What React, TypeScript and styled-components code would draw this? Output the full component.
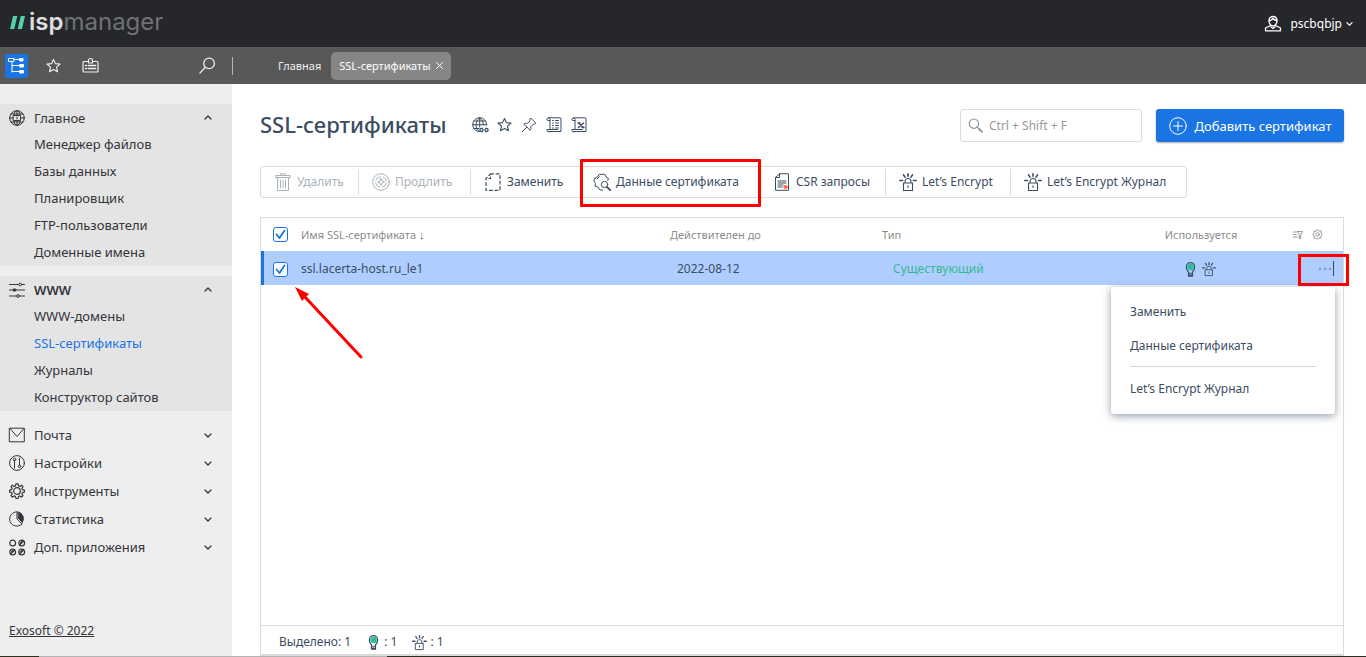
import React from 'react';
import styled, { createGlobalStyle, css } from 'styled-components';

const font = '"Noto Sans", "Open Sans", sans-serif';

const GlobalStyle = createGlobalStyle`
  *, *::before, *::after { box-sizing: border-box; }
  body { margin: 0; background: #fff; font-family: ${font}; font-size: 13px; line-height: 18px; color: #3b4d63; }
  button, input { font: inherit; color: inherit; }
  button { background: none; border: 0; padding: 0; cursor: pointer; white-space: nowrap; }
  a { color: inherit; text-decoration: none; }
  svg { display: block; flex: none; overflow: visible; }
`;

/* ---------- icons ---------- */

const Svg = styled.svg`
  fill: none;
  stroke: currentColor;
  stroke-width: 1;
  stroke-linecap: round;
  stroke-linejoin: round;
`;

type IconProps = { size?: number; children: React.ReactNode; weight?: number; box?: number };
const Icon = ({ size = 16, box = 16, weight = 1, children }: IconProps) => (
  <Svg width={size} height={size} viewBox={`0 0 ${box} ${box}`} strokeWidth={weight} style={{ strokeWidth: weight }} aria-hidden="true">
    {children}
  </Svg>
);

const TreeIcon = () => (
  <Icon size={17} box={17}>
    <path d="M1 1.500h5v3H1zM6 2.500h6M4 4.500v10.500M4 8.500h8M4 14.500h8" />
    <path d="M12 1.500h3v2.500h-3zM12 7.500h3.500v2.500H12zM12 13.500h3.500V16H12z" fill="currentColor" />
  </Icon>
);
const StarIcon = ({ size = 15 }: { size?: number }) => (
  <Icon size={size} weight={1.2}>
    <path d="M8 1.500l2 4.500 5 .5-3.800 3.300 1.100 4.900L8 12.200l-4.300 2.500 1.100-4.900L1 6.500 6 6z" />
  </Icon>
);
const BadgeIcon = () => (
  <Icon size={17} box={17} weight={1.200}>
    <path d="M6.500 4.500H2a1 1 0 0 0-1 1v8.500a1 1 0 0 0 1 1h13a1 1 0 0 0 1-1V5.500a1 1 0 0 0-1-1h-4.500" />
    <path d="M6.500 6V3.500a2 2 0 0 1 4 0V6z" />
    <path d="M3.500 8.500h1M3.500 11.500h1M6.500 8.500h7M6.500 11.500h7" strokeWidth="1.600" />
  </Icon>
);
const SearchIcon = ({ flip = false, size = 17 }: { flip?: boolean; size?: number }) => (
  <Icon size={size} weight={1.200}>
    {flip ? (
      <><circle cx="9.500" cy="6" r="5" /><path d="M6 9.700L.8 15.200" /></>
    ) : (
      <><circle cx="6.300" cy="6" r="5" /><path d="M9.800 9.700l2 2" /><path d="M11.800 11.700l3.200 3.100" style={{ strokeWidth: 2 }} /></>
    )}
  </Icon>
);
const UserIcon = () => (
  <Icon size={18} box={18} weight={1.300}>
    <path d="M9 1.500c-2.800 0-4 1.800-4 4.200 0 2.600 1.800 5.300 4 5.300s4-2.700 4-5.300c0-2.400-1.200-4.200-4-4.200z" />
    <path d="M5.200 5.500c2 0 3-1 3.800-2 1 1.300 2 2 3.800 2M6.500 10.500L1.500 13v2.800h15V13l-5-2.500M7 12l2 1.500 2-1.500" />
  </Icon>
);
const Chevron = ({ up = false, size = 8 }: { up?: boolean; size?: number }) => (
  <Icon size={size} box={8} weight={1.300}>
    {up ? <path d="M1 5l3-3 3 3" /> : <path d="M1 3l3 3 3-3" />}
  </Icon>
);
const HomeGlobe = () => (
  <Icon>
    <circle cx="8" cy="8" r="7.300" />
    <path d="M8 .7v4M8 11v4.300M2 4h12M2 12h12M.7 8H4M12 8h3.300M5 4.500C5.500 2 6.500.9 8 .7c1.500.2 2.500 1.300 3 3.800M5 11.500c.5 2.500 1.500 3.600 3 3.800 1.500-.2 2.500-1.300 3-3.800M4.500 5.500h7v5h-7zM8 7v2" />
  </Icon>
);
const SlidersIcon = () => (
  <Icon>
    <path d="M.5 2.500h9M13 2.500h2.500M.5 8h15M.5 14h7M10.500 14h5" />
    <circle cx="11.300" cy="2.500" r="1.400" /><circle cx="5.500" cy="8" r="1.300" fill="currentColor" /><circle cx="9" cy="14" r="1.400" />
  </Icon>
);
const MailIcon = () => <Icon><path d="M.7 1.200h14.600v13.600H.7zM1 1.500l7 8 7-8" /></Icon>;
const TuneIcon = () => (
  <Icon><circle cx="8" cy="8" r="7.400" /><path d="M5.500 5.500V13M10.500 3v7" /><circle cx="5.500" cy="4.500" r="1.300" /><circle cx="10.500" cy="11.300" r="1.300" /></Icon>
);
const gearPath = 'M6.900.8h2.200l.4 2 1.300.6 1.800-1.200 1.400 1.500-1.100 1.700.5 1.300 2 .4v2l-2 .4-.5 1.400 1.100 1.700-1.400 1.500-1.800-1.200-1.300.6-.4 2H6.900l-.4-2-1.300-.6-1.800 1.200L2 12.600l1.100-1.700-.5-1.400-2-.4v-2l2-.4.5-1.300L2 3.700l1.400-1.500 1.800 1.200 1.300-.6z';
const GearIcon = () => <Icon weight={1.200}><path d={gearPath} /><circle cx="8" cy="8" r="3.300" /></Icon>;
const PieIcon = () => (
  <Icon><path d="M8 .8a7.200 7.200 0 1 0 5 12.200M8 .8V8l5 5" /><path d="M9.500 1a7 7 0 0 1 3.800 10.500L9.500 7.300z" fill="currentColor" /></Icon>
);
const AppsIcon = () => (
  <Icon size={17} box={17} weight={1.200}>
    <circle cx="3.700" cy="4" r="2.900" /><circle cx="12.700" cy="4" r="2.900" /><circle cx="3.700" cy="13" r="2.900" /><circle cx="12.700" cy="13" r="2.900" />
    <path d="M11 5.700l3.400-3.400M2 14.700l3.400-3.400M11 14.700l3.400-3.400M2.500 13l1.500-1.500M11.500 4L13 2.500M11.500 13l1.500-1.500" />
  </Icon>
);
const WebLinkIcon = () => (
  <Icon>
    <path d="M14.700 8A7 7 0 1 0 7.500 14.700M7.700.8v9.200M2 4h11.500M.8 7.700h14M2 11.500h5M7.700.8C5 3 4 5.500 4 8c0 2.600 1 4.700 3 6.500M7.700.8c2.700 2.200 3.500 4.200 3.600 7" />
    <path d="M10.500 11.300h-1a1.500 1.500 0 0 0 0 3.200h1M13.500 11.300h1a1.500 1.500 0 0 1 0 3.200h-1M10.500 12.900h3" style={{ strokeWidth: 1.3 }} />
  </Icon>
);
const PinIcon = () => (
  <Icon><path d="M10 1.300l4.800 4.800-1.300 1.300-1.200-.2-2.600 2.600c.5 1.600.3 2.700-.5 3.500L2.800 7c.8-.8 2-1 3.500-.5L8.900 3.900 8.700 2.600zM5.800 10.200L1 15" /></Icon>
);
const ScrollIcon = ({ cross = false }: { cross?: boolean }) => (
  <Icon>
    <path d="M4 12.500V2.500C4 1 2.500.7 1.500 1.200.5 1.800.7 3.500 2 3.500h2M2.500.8H14a1 1 0 0 1 1 1v12.700H3M11.500 12.500H1v1c0 1.300 1.500 1.700 2.500 1.300" />
    {cross
      ? <path d="M7.500 6l5 4.500M12.500 6l-5 4.500M7 6h2M11 10.500h2" style={{ strokeWidth: 1.5 }} />
      : <path d="M6.500 3.500h1M9.500 3.500h3M6.500 6h1M9.500 6h3M6.500 8.500h1M9.500 8.500h3M6.500 11h1M9.500 11h3" />}
  </Icon>
);
const TrashIcon = () => (
  <Icon size={18} box={18}><path d="M2 4.500h14M6.500 2.500V.8h5v1.700M2 2.500h14v2M2 2.500v2M3.500 4.500v13h11v-13M6.500 7v8M9 7v8M11.500 7v8" /></Icon>
);
const RenewIcon = () => (
  <Icon size={18} box={18}><circle cx="9" cy="9" r="8.300" /><circle cx="9" cy="9" r="5.500" strokeDasharray="5.640 3" strokeDashoffset="-1.500" /><path d="M9 5.500l1 2.500 2.500 1-2.500 1-1 2.500L8 10 5.500 9 8 8z" /></Icon>
);
const ReplaceIcon = () => (
  <Icon size={18} box={18} weight={1.200}><path d="M6.500.8H16v16.500H2V5.500L6.500.8v4.700H2" strokeDasharray="3 2.600" /></Icon>
);
const CertIcon = () => (
  <Icon size={18} box={18}>
    <path d="M14.800 7.500l.6-2-2.200-1.300L11.800 1.300H6.300L4.700 3.700 1.500 5.200.9 8l1.600 2.500L1.900 13l3.300 1.200 1.600 2.600 3 .3M4 6l2.300-2.300" />
    <circle cx="11.500" cy="11.500" r="3.200" /><path d="M13.900 13.900l3.300 3.200" style={{ strokeWidth: 1.800 }} />
  </Icon>
);
const CsrIcon = () => (
  <Icon size={18} box={18}>
    <path d="M6.500.8h9v16.500h-13V4.500L6.500.8v3.700h-4M5 8h8M5 10h8M5 12h5M5 14h4" />
    <circle cx="12.500" cy="14" r="1.700" fill="#ff6e4a" stroke="#ff6e4a" />
  </Icon>
);
const LockIcon = ({ size = 18 }: { size?: number }) => (
  <Icon size={size} box={18} weight={1.100}>
    <path d="M4.500 10h9v7.500h-9zM6 10V8.500a3 3 0 0 1 6 0V10M9 12.800v1.700" />
    <path d="M9 .8v2.500M4.500 1.800L6 4.200M13.500 1.800L12 4.200M.8 7.500h2.700M14.500 7.500h2.700" style={{ strokeWidth: 1.6 }} />
  </Icon>
);
const BulbIcon = ({ size = 16 }: { size?: number }) => (
  <Icon size={size} weight={1.200}>
    <path d="M5.800 10.500C4.500 9 3.500 7.500 3.500 5.200a4.500 4.500 0 0 1 9 0c0 2.300-1 3.800-2.300 5.300v4.700H5.800zM6 12h4M6 14h4" />
    <circle cx="8" cy="5.300" r="3" fill="#2cbf98" stroke="#2cbf98" />
  </Icon>
);
const PlusCircle = () => (
  <Icon size={18} box={18}><circle cx="9" cy="9" r="8.300" /><path d="M9 4.500v9M4.500 9h9" /></Icon>
);
const FilterIcon = () => (
  <Icon size={10} box={10} weight={0.900}><path d="M.3 2h3M.3 4.500h3M.3 7h4M4.500 1.500h5L7.700 5v3.500H6.300V5z" /></Icon>
);
const SettingsIcon = () => (
  <Icon size={11} weight={1.300}><path d="M8 1l2 2 3-.2.200 3L15 8l-1.800 2.200-.2 3-3-.2-2 2-2-2-3 .2-.2-3L1 8l1.800-2.200.2-3L6 3z" /><circle cx="8" cy="8" r="2.500" /></Icon>
);

/* ---------- layout ---------- */

const Page = styled.div`
  min-height: 100vh;
  display: flex;
  flex-direction: column;
`;
const Header = styled.header`
  height: 47px;
  flex: none;
  padding: 0 13px 0 10px;
  display: flex;
  align-items: center;
  justify-content: space-between;
  background: #26272b;
  color: #fff;
`;
const Logo = styled.a`
  display: flex;
  align-items: center;
  gap: 4px;
  padding-bottom: 3px;
  font-family: Inter, sans-serif;
  font-size: 24px;
  line-height: 30px;
  color: #707175;
`;
const LogoStrong = styled.b`
  font-weight: 600;
  color: #dededf;
`;
const UserButton = styled.button`
  display: flex;
  align-items: center;
  font-size: 12px;
  gap: 8px;
`;
const UserName = styled.span`
  display: flex;
  align-items: center;
  gap: 4px;
`;

const NavBar = styled.nav`
  height: 37px;
  flex: none;
  display: flex;
  align-items: center;
  background: #585858;
  color: #f0f0f0;
`;
const NavTools = styled.div`
  width: 233px;
  height: 18px;
  flex: none;
  padding: 0 16px 0 5px;
  display: flex;
  align-items: center;
  gap: 14px;
  border-right: 1px solid #b4b4b4;
`;
const NavTool = styled.button<{ $active?: boolean; $end?: boolean }>`
  width: 23px;
  height: 24px;
  display: grid;
  place-items: center;
  border-radius: 2px;
  ${p => p.$active && css`background: #1b74e4; color: #fff;`}
  ${p => p.$end && css`width: 17px; margin-left: auto;`}
`;
const Tabs = styled.div`
  display: flex;
  align-items: center;
  gap: 2px;
  margin-left: 37px;
  font-size: 11px;
`;
const Tab = styled.a<{ $active?: boolean }>`
  height: 28px;
  padding: 0 8px;
  display: flex;
  align-items: center;
  gap: 5px;
  border-radius: 5px;
  ${p => p.$active && css`background: #868686; color: #fff;`}
`;
const TabLink = styled.a``;
const TabClose = styled.button`
  width: 7px;
  height: 12px;
  display: grid;
  place-items: center;
`;

const Body = styled.div`
  flex: 1;
  display: flex;
`;
const Sidebar = styled.aside`
  width: 232px;
  flex: none;
  padding-top: 20px;
  display: flex;
  flex-direction: column;
  gap: 10px;
  background: #eee;
  color: #33353a;
`;
const Group = styled.section<{ $open?: boolean }>`
  ${p => p.$open && css`background: #e4e4e4;`}
`;
const GroupHead = styled.button<{ $tall?: boolean; $bold?: boolean }>`
  width: 100%;
  height: ${p => (p.$tall ? 28 : 27)}px;
  padding: 0 20px 0 9px;
  display: grid;
  grid-template-columns: 17px 1fr 8px;
  align-items: center;
  gap: 8px;
  text-align: left;
  font-weight: ${p => (p.$bold ? 600 : 400)};
`;
const SubLink = styled.a<{ $active?: boolean }>`
  display: block;
  padding-left: 34px;
  line-height: 27px;
  ${p => p.$active && css`color: #1b74e4;`}
`;
const Copyright = styled.a`
  margin: auto 0 16px 9px;
  align-self: flex-start;
  font-size: 12px;
  text-decoration: underline;
`;

const Main = styled.main`
  flex: 1;
  min-width: 0;
  padding: 25px 22px 0 28px;
  display: flex;
  flex-direction: column;
`;
const TitleRow = styled.div`
  height: 33px;
  margin-bottom: 24px;
  display: flex;
  align-items: center;
`;
const Title = styled.h1`
  margin: 0 25px 0 0;
  padding-bottom: 3px;
  font-size: 22px;
  line-height: 30px;
  font-weight: 500;
`;
const TitleTools = styled.div`
  display: flex;
  gap: 9px;
  align-items: center;
  padding-bottom: 2px;
`;
const SearchBox = styled.label`
  width: 182px;
  height: 33px;
  margin: 0 14px 0 auto;
  padding: 0 7px;
  display: flex;
  align-items: center;
  gap: 6px;
  border: 1px solid #dcdcdc;
  border-radius: 3px;
  color: #8593a0;
`;
const SearchInput = styled.input`
  min-width: 0;
  flex: 1;
  padding: 0;
  border: 0;
  outline: 0;
  font-size: 12px;
  &::placeholder { color: #999; opacity: 1; }
`;
const AddButton = styled.button`
  width: 188px;
  height: 33px;
  display: flex;
  align-items: center;
  justify-content: center;
  gap: 8px;
  border-radius: 3px;
  background: #1b74e4;
  color: #fff;
  box-shadow: 0 1px 2px #0005;
`;

const Toolbar = styled.div`
  height: 32px;
  margin-bottom: 19px;
  align-self: flex-start;
  display: flex;
  align-items: center;
  border: 1px solid #dcdcdc;
  border-radius: 3px;
`;
const ToolButton = styled.button<{ $width: number; $marked?: boolean }>`
  position: relative;
  width: ${p => p.$width}px;
  height: 26px;
  padding-left: 13px;
  display: flex;
  align-items: center;
  gap: 5px;
  border-right: 1px solid #dcdcdc;
  font-size: 12px;
  &:last-child { border-right: 0; }
  &:disabled { color: #aab2ba; }
  ${p => p.$marked && css`
    padding-left: 12px;
    border-right-color: transparent;
    &::after {
      content: '';
      position: absolute;
      inset: -10px -2px -12px -1px;
      border: 3px solid #fe0000;
      border-radius: 1px;
    }
  `}
`;

const Panel = styled.section`
  flex: 1;
  display: flex;
  flex-direction: column;
  border: 1px solid #dcdcdc;
  border-bottom-width: 2px;
`;
const Table = styled.table`
  width: 100%;
  table-layout: fixed;
  border-collapse: collapse;
`;
const Col = styled.col<{ $w?: number }>`
  ${p => p.$w && css`width: ${p.$w}px;`}
`;
const Th = styled.th<{ $center?: boolean }>`
  height: 33px;
  padding: 0;
  text-align: ${p => (p.$center ? 'center' : 'left')};
  font-size: 11px;
  font-weight: 400;
  color: #8c8c8c;
`;
const SortArrow = styled.b`
  color: #555;
`;
const Row = styled.tr`
  background: #afceff;
  box-shadow: inset 3px 0 #1b74e4;
`;
const Td = styled.td<{ $indent?: number; $tone?: string }>`
  height: 34px;
  position: relative;
  padding: 2px 0 0 ${p => p.$indent || 0}px;
  font-size: 12px;
  color: ${p => p.$tone || '#3b4d63'};
`;
const CheckLabel = styled.label`
  width: 15px;
  height: 15px;
  margin-left: 12px;
  display: grid;
  color: #1b74e4;
  & > * { grid-area: 1 / 1; }
`;
const CheckInput = styled.input`
  appearance: none;
  width: 15px;
  height: 15px;
  margin: 0;
  border: 1px solid #1b74e4;
  border-radius: 3px;
  background: #fff;
`;
const IconPair = styled.span<{ $gap?: number; $end?: boolean }>`
  display: flex;
  align-items: center;
  justify-content: ${p => (p.$end ? 'flex-end' : 'center')};
  gap: ${p => p.$gap || 4}px;
  padding-right: ${p => (p.$end ? 20 : 4)}px;
`;
const MoreButton = styled.button`
  position: absolute;
  inset: 3px -6px -1px auto;
  width: 51px;
  padding: 0 11px 4px 0;
  display: flex;
  align-items: center;
  justify-content: flex-end;
  border: 3px solid #fe0000;
  color: #8b9bb5;
`;
const Menu = styled.ul`
  position: absolute;
  z-index: 2;
  top: 36px;
  right: 8px;
  width: 224px;
  margin: 0;
  padding: 8px 19px;
  list-style: none;
  background: #fff;
  border-radius: 3px;
  box-shadow: 0 2px 8px #33475f88;
`;
const MenuItem = styled.li<{ $divided?: boolean }>`
  line-height: 34px;
  ${p => p.$divided && css`margin-top: 3px; padding-top: 5px; border-top: 1px solid #d4d4d4;`}
`;
const Pointer = styled.svg`
  position: absolute;
  z-index: 1;
  left: 34px;
  top: 36px;
`;
const PanelFooter = styled.footer`
  height: 29px;
  margin-top: auto;
  padding: 4px 18px 0;
  display: flex;
  align-items: center;
  gap: 15px;
  border-top: 1px solid #dcdcdc;
  font-size: 12px;
`;
const Counter = styled.span`
  display: flex;
  align-items: center;
  gap: 3px;
`;
const Edge = styled.div`
  height: 1px;
  flex: none;
  background: linear-gradient(90deg, #2f3020 39px, #b4b4b4 39px 387px, #2c3022 387px);
`;

/* ---------- content ---------- */

const openGroups = [
  { name: 'Главное', icon: <HomeGlobe />, bold: false, items: ['Менеджер файлов', 'Базы данных', 'Планировщик', 'FTP-пользователи', 'Доменные имена'] },
  { name: 'WWW', icon: <SlidersIcon />, bold: true, items: ['WWW-домены', 'SSL-сертификаты', 'Журналы', 'Конструктор сайтов'] },
];
const closedGroups = [
  { name: 'Почта', icon: <MailIcon /> },
  { name: 'Настройки', icon: <TuneIcon /> },
  { name: 'Инструменты', icon: <GearIcon /> },
  { name: 'Статистика', icon: <PieIcon /> },
  { name: 'Доп. приложения', icon: <AppsIcon /> },
];
const tools = [
  { name: 'Удалить', icon: <TrashIcon />, width: 98, disabled: true },
  { name: 'Продлить', icon: <RenewIcon />, width: 112, disabled: true },
  { name: 'Заменить', icon: <ReplaceIcon />, width: 110 },
  { name: 'Данные сертификата', icon: <CertIcon />, width: 179, marked: true },
  { name: 'CSR запросы', icon: <CsrIcon />, width: 126 },
  { name: 'Let’s Encrypt', icon: <LockIcon />, width: 125 },
  { name: 'Let’s Encrypt Журнал', icon: <LockIcon />, width: 175 },
];

const Check = ({ label }: { label: string }) => (
  <CheckLabel>
    <CheckInput type="checkbox" defaultChecked aria-label={label} />
    <Icon size={15} box={15} weight={1.800}><path d="M3.500 7.500l3 3.500 5-7.500" /></Icon>
  </CheckLabel>
);

export default function App() {
  return (
    <Page>
      <GlobalStyle />
      <Header>
        <Logo href="#">
          <svg width="15" height="13" viewBox="0 0 15 13" fill="#55d0a8"><path d="M3 0h4.300L4.300 13H0zM10.700 0H15l-3 13H7.700z" /></svg>
          <span><LogoStrong>isp</LogoStrong>manager</span>
        </Logo>
        <UserButton><UserIcon /><UserName>pscbqbjp <Chevron size={7} /></UserName></UserButton>
      </Header>
      <NavBar>
        <NavTools>
          <NavTool $active aria-label="Меню"><TreeIcon /></NavTool>
          <NavTool aria-label="Избранное"><StarIcon /></NavTool>
          <NavTool aria-label="Карточка"><BadgeIcon /></NavTool>
          <NavTool $end aria-label="Поиск"><SearchIcon flip /></NavTool>
        </NavTools>
        <Tabs>
          <Tab href="#">Главная</Tab>
          <Tab as="div" $active>
            <TabLink href="#">SSL-сертификаты</TabLink>
            <TabClose aria-label="Закрыть"><Icon size={7} box={7}><path d="M.5.5l6 6M6.500.5l-6 6" /></Icon></TabClose>
          </Tab>
        </Tabs>
      </NavBar>
      <Body>
        <Sidebar>
          {openGroups.map(g => (
            <Group key={g.name} $open>
              <GroupHead $bold={g.bold}>{g.icon}<span>{g.name}</span><Chevron up /></GroupHead>
              {g.items.map(i => <SubLink key={i} href="#" $active={i === 'SSL-сертификаты'}>{i}</SubLink>)}
            </Group>
          ))}
          <Group>
            {closedGroups.map(g => (
              <GroupHead key={g.name} $tall>{g.icon}<span>{g.name}</span><Chevron /></GroupHead>
            ))}
          </Group>
          <Copyright href="#">Exosoft © 2022</Copyright>
        </Sidebar>
        <Main>
          <TitleRow>
            <Title>SSL-сертификаты</Title>
            <TitleTools>
              <button aria-label="Ссылка"><WebLinkIcon /></button>
              <button aria-label="В избранное"><StarIcon size={15} /></button>
              <button aria-label="Закрепить"><PinIcon /></button>
              <button aria-label="Список"><ScrollIcon /></button>
              <button aria-label="Экспорт"><ScrollIcon cross /></button>
            </TitleTools>
            <SearchBox>
              <SearchIcon size={15} />
              <SearchInput type="text" placeholder="Ctrl + Shift + F" aria-label="Поиск в таблице" />
            </SearchBox>
            <AddButton><PlusCircle />Добавить сертификат</AddButton>
          </TitleRow>
          <Toolbar>
            {tools.map(t => (
              <ToolButton key={t.name} $width={t.width} $marked={t.marked} disabled={t.disabled}>{t.icon}{t.name}</ToolButton>
            ))}
          </Toolbar>
          <Panel>
            <Table>
              <colgroup><Col $w={40} /><Col /><Col $w={212} /><Col $w={248} /><Col $w={142} /><Col $w={71} /></colgroup>
              <thead>
                <tr>
                  <Th><Check label="Выбрать все" /></Th>
                  <Th>Имя SSL-сертификата <SortArrow>↓</SortArrow></Th>
                  <Th>Действителен до</Th>
                  <Th>Тип</Th>
                  <Th $center>Используется</Th>
                  <Th><IconPair $gap={9} $end><FilterIcon /><SettingsIcon /></IconPair></Th>
                </tr>
              </thead>
              <tbody>
                <Row>
                  <Td>
                    <Check label="Выбрать сертификат" />
                    <Pointer width="68" height="72" viewBox="0 0 68 72" aria-hidden="true">
                      <path d="M9 9l57 61" stroke="#fe0000" strokeWidth="3" strokeLinecap="round" />
                      <path d="M0 0l14 7-7 7z" fill="#fe0000" />
                    </Pointer>
                  </Td>
                  <Td>ssl.lacerta-host.ru_le1</Td>
                  <Td $indent={7}>2022-08-12</Td>
                  <Td $indent={11} $tone="#35b995">Существующий</Td>
                  <Td><IconPair><BulbIcon size={15} /><LockIcon size={14} /></IconPair></Td>
                  <Td>
                    <MoreButton aria-label="Действия">
                      <svg width="18" height="16" viewBox="0 0 18 16" fill="currentColor">
                        <circle cx="3" cy="9" r="1.200" /><circle cx="8" cy="9" r="1.200" /><circle cx="13" cy="9" r="1.200" />
                        <path d="M16 1h1v15h-1z" fill="#33475f" />
                      </svg>
                    </MoreButton>
                    <Menu>
                      <MenuItem><a href="#">Заменить</a></MenuItem>
                      <MenuItem><a href="#">Данные сертификата</a></MenuItem>
                      <MenuItem $divided><a href="#">Let’s Encrypt Журнал</a></MenuItem>
                    </Menu>
                  </Td>
                </Row>
              </tbody>
            </Table>
            <PanelFooter>
              <span>Выделено: 1</span>
              <Counter><BulbIcon size={15} />: 1</Counter>
              <Counter><LockIcon size={15} />: 1</Counter>
            </PanelFooter>
          </Panel>
        </Main>
      </Body>
      <Edge />
    </Page>
  );
}
